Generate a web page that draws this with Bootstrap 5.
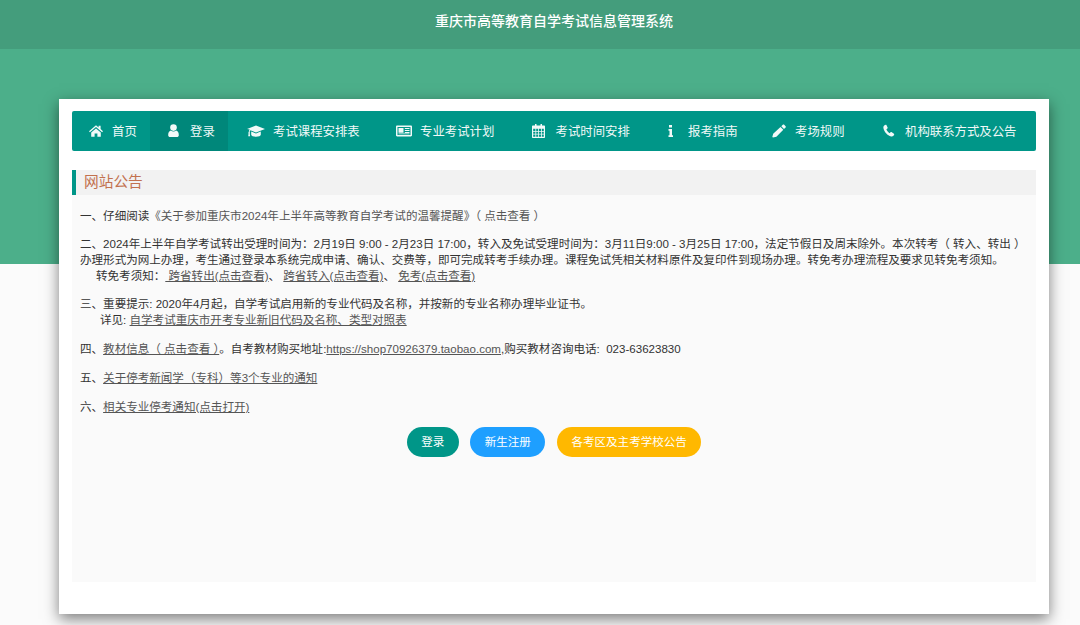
<!DOCTYPE html>
<html lang="zh-CN">
<head>
<meta charset="utf-8">
<title>重庆市高等教育自学考试信息管理系统</title>
<link href="https://cdn.jsdelivr.net/npm/bootstrap@5.3.0/dist/css/bootstrap.min.css" rel="stylesheet">
<style>
html,body{height:625px;overflow:hidden}
body{background:#fbfbfb;font-family:"Liberation Sans","Noto Sans CJK SC",sans-serif;font-size:11.55px;color:#333}
.topbar{height:49px;background:#449d7c;color:#fff;font-size:14px;font-weight:500;padding:0 0 7px 28px}
.band{height:215px;background:#4caf8a}
.shell{margin-top:-165px;padding-left:28px}
.sheet{width:990px;height:515px;background:#fff;padding:12px 13px 32px;box-shadow:0 5px 14px rgba(0,0,0,.5)}
.tabs{display:grid;grid-template-columns:78px 78px 150px 136px 136px 105px 111px 170px;height:40px;background:#009688;border-radius:2px}
.tabs a{display:flex;align-items:center;color:#fff;font-size:12.4px;text-decoration:none;opacity:.95}
.tabs a span{padding-top:2px}
.tabs a.on{background:#00877a}
.tabs svg{flex:none;fill:#fff}
.pl17{padding-left:17px}.pl18{padding-left:18px}.pl19{padding-left:19px}
.headline{margin:19px 0 0;height:25px;line-height:24px;background:#f2f2f2;border-left:4px solid #009688;padding-left:8px;font-size:14.7px;color:#c2714f}
.notice{height:387px;background:#fafafa;padding:13px 8px 0;line-height:16px}
.notice p{margin:0 0 13px;white-space:nowrap}
.notice p:nth-child(-n+2){margin-bottom:12px}
.notice p a{color:#555;text-decoration:underline}
.notice p a.plain{text-decoration:none}
.indent1{margin-left:16px}.indent2{margin-left:20px}
.actions{margin-top:-1px;gap:11.5px}
.actions .btn{height:30px;padding:0 14.500px;line-height:30px;border:0;border-radius:15px;color:#fff;font-size:11.55px}
.go-green{background:#009688}.go-blue{background:#1e9fff}.go-gold{background:#ffb800}
</style>
</head>
<body>
<header class="topbar d-flex align-items-center justify-content-center">重庆市高等教育自学考试信息管理系统</header>
<div class="band"></div>
<div class="shell d-flex justify-content-center">
<main class="sheet">
<nav class="tabs">
<a href="#" class="pl17"><svg width="23" height="14" viewBox="0 0 23 14"><path d="M7 1.200 0 7.200l.9 1L7 3l6.100 5.200.9-1-2.400-2.100V1.800h-2v1.600z"/><path d="M2.200 8.600 7 4.400l4.800 4.200v4.200H8.400V9.400H5.600v3.400H2.200z"/></svg><span>首页</span></a>
<a href="#" class="on pl18"><svg width="22" height="14" viewBox="0 0 22 14"><circle cx="5.500" cy="3.600" r="3.300"/><path d="M.2 11.200C.2 8.800.8 7 2.800 6.400c1.500 1.400 3.900 1.400 5.400 0 2 .6 2.600 2.400 2.600 4.800 0 1.100-.8 1.800-1.900 1.800H2.100C1 13 .2 12.300.2 11.200z"/></svg><span>登录</span></a>
<a href="#" class="pl19"><svg width="26" height="14" viewBox="0 0 26 14"><path d="M9 1.500 18 5 9 8.500 3.400 6.300c-.5.5-.7 1.200-.8 2 .3.200.4.400.4.700 0 .3-.1.500-.3.600l.4 2.600H1.200l.4-2.600c-.2-.1-.3-.3-.3-.6s.1-.5.4-.7c.1-1 .4-2 1-2.700L0 5z"/><path d="M4.200 7.600 9 9.500l4.800-1.900v3.100c0 1.100-2.200 2-4.800 2s-4.800-.9-4.800-2z"/></svg><span>考试课程安排表</span></a>
<a href="#" class="pl18"><svg width="24" height="14" viewBox="0 0 24 14"><path fill-rule="evenodd" d="M1.200 1.500h13.600c.7 0 1.200.5 1.200 1.200v8.600c0 .7-.5 1.200-1.200 1.200H1.200C.5 12.500 0 12 0 11.300V2.700C0 2 .5 1.500 1.200 1.500zM1.500 3v8h13V3zM2.500 4h5v4.800h-5zM8.800 4h4.700v1.100H8.800zM8.800 6h4.700v1.100H8.800zM8.800 8h4.700v1.100H8.800zM2.500 9.500h11v.7h-11z"/></svg><span>专业考试计划</span></a>
<a href="#" class="pl18"><svg width="23.500" height="14" viewBox="0 0 23.500 14"><path fill-rule="evenodd" d="M3 0h1.500v1.500h4V0H10v1.500h2c.6 0 1 .4 1 1V13c0 .6-.4 1-1 1H1c-.6 0-1-.4-1-1V2.500c0-.6.4-1 1-1h2zM1.200 4.700v2.200h2.200V4.700zM4.200 4.700v2.200h2V4.700zM7 4.700v2.200h2V4.700zM9.800 4.700v2.200h2V4.700zM1.200 7.700v2.100h2.200V7.700zM4.200 7.700v2.100h2V7.700zM7 7.700v2.100h2V7.700zM9.800 7.700v2.100h2V7.700zM1.200 10.600v2.200h2.200v-2.200zM4.200 10.600v2.200h2v-2.200zM7 10.600v2.200h2v-2.200zM9.800 10.600v2.200h2v-2.200z"/></svg><span>考试时间安排</span></a>
<a href="#" class="pl17"><svg width="21" height="14" viewBox="0 0 21 14"><path d="M2 1h3v2.500H2zM1.500 5H5v6.200h1V13H1.500v-1.800h1V6.800h-1z"/></svg><span>报考指南</span></a>
<a href="#" class="pl17"><svg width="23" height="14" viewBox="0 0 23 14"><path d="M8.500 3 11.300 5.800 4.400 12.700 1 13.600.3 12.900l.9-3.100zM9.300 2.200 10.800.8c.4-.4 1-.4 1.400 0l1.400 1.400c.4.4.4 1 0 1.400L12 5z"/></svg><span>考场规则</span></a>
<a href="#" class="pl17"><svg width="22" height="14" viewBox="0 0 22 14"><path d="M2.600.8C1 1.300.1 2.500.4 4c.7 4 4.100 7.400 7.700 8.500 1.400.4 2.600-.5 3.100-1.900.1-.4 0-.7-.3-.9L8.500 8c-.3-.2-.7-.1-1 .2l-.8 1C5.300 8.400 3.900 6.800 3.400 5.300l1-.7c.3-.3.400-.7.2-1L3.400 1c-.2-.2-.5-.3-.8-.2z"/></svg><span>机构联系方式及公告</span></a>
</nav>
<h2 class="headline fw-normal">网站公告</h2>
<section class="notice">
<p>一、仔细阅读<a class="plain" href="#">《关于参加重庆市2024年上半年高等教育自学考试的温馨提醒》（ 点击查看 ）</a></p>
<p>二、2024年上半年自学考试转出受理时间为：2月19日 9:00 - 2月23日 17:00，转入及免试受理时间为：3月11日9:00 - 3月25日 17:00，法定节假日及周末除外。本次转考（ 转入、转出 ）<br>办理形式为网上办理，考生通过登录本系统完成申请、确认、交费等，即可完成转考手续办理。课程免试凭相关材料原件及复印件到现场办理。转免考办理流程及要求见转免考须知。<br><span class="indent1">转免考须知：</span><a href="#">&nbsp;跨省转出(点击查看)</a>、 <a href="#">跨省转入(点击查看)</a>、 <a href="#">免考(点击查看)</a></p>
<p>三、重要提示: 2020年4月起，自学考试启用新的专业代码及名称，并按新的专业名称办理毕业证书。<br><span class="indent2">详见:</span> <a href="#">自学考试重庆市开考专业新旧代码及名称、类型对照表</a></p>
<p>四、<a href="#">教材信息（ 点击查看 ）</a>。自考教材购买地址:<a href="#">https://shop70926379.taobao.com</a>,购买教材咨询电话:&nbsp; 023-63623830</p>
<p>五、<a href="#">关于停考新闻学（专科）等3个专业的通知</a></p>
<p>六、<a href="#">相关专业停考通知(点击打开)</a></p>
<div class="actions d-flex justify-content-center">
<a href="#" class="btn go-green">登录</a>
<a href="#" class="btn go-blue">新生注册</a>
<a href="#" class="btn go-gold">各考区及主考学校公告</a>
</div>
</section>
</main>
</div>
<script src="https://cdn.jsdelivr.net/npm/bootstrap@5.3.0/dist/js/bootstrap.bundle.min.js"></script>
</body>
</html>
